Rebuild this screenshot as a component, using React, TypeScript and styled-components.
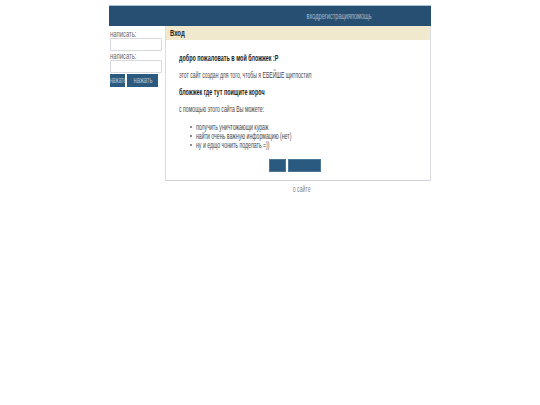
import React from "react";
import styled, { createGlobalStyle } from "styled-components";

const GlobalStyle = createGlobalStyle`
  html, body {
    margin: 0;
    padding: 0;
    background: #fff;
  }
  body {
    font-family: "Liberation Sans", Arial, sans-serif;
    font-size: 8.5px;
    color: #444;
  }
`;

// the original font is a condensed one, none is installed so squeeze the text
const Squeezed = styled.span<{ $origin?: string; $scale?: number }>`
  display: inline-block;
  flex-shrink: 0;
  white-space: nowrap;
  transform: scaleX(${({ $scale }) => $scale ?? 0.61});
  transform-origin: ${({ $origin }) => $origin ?? "left"} center;
`;

const Page = styled.div`
  width: 322px;
  margin-left: 109px;
  padding-top: 5px;
`;

const Header = styled.header`
  height: 21px;
  background: #264f72;
  border-top: 1px solid #a9c4d6;
  box-sizing: border-box;
  display: flex;
  justify-content: flex-end;
  align-items: center;
  padding-right: 59px;
`;

const NavLink = styled.a`
  color: #a9bccb;
  font-size: 8.5px;
`;

const Columns = styled.div`
  display: flex;
  gap: 3px;
`;

const Sidebar = styled.form`
  width: 53px;
  display: flex;
  flex-direction: column;
  padding-top: 3px;
`;

const FieldLabel = styled.label`
  height: 9px;
  line-height: 11px;
  font-size: 8.5px;
  color: #666;
  margin-left: 1px;
`;

const TextInput = styled.input`
  width: 52px;
  height: 13px;
  box-sizing: border-box;
  border: 1px solid #d5d8dc;
  border-radius: 1px;
  background: #fff;
  padding: 0;
  margin: 0 0 0 1px;
`;

const ButtonRow = styled.div`
  display: flex;
  gap: 2px;
  margin: 1px 0 0 1px;
`;

const SideButton = styled.button<{ $width: number }>`
  width: ${({ $width }) => $width}px;
  height: 13px;
  padding: 0;
  border: 0;
  background: #2a5a80;
  color: #b5c7d5;
  font: inherit;
  font-size: 8.5px;
  line-height: 13px;
  display: flex;
  justify-content: center;
`;

const Panel = styled.main`
  width: 266px;
  height: 155px;
  box-sizing: border-box;
  border: 1px solid #dcdde3;
  border-top: 0;
  border-bottom: 1px solid #cfd0dc;
`;

const PanelTitle = styled.h2`
  margin: 0;
  height: 14px;
  line-height: 14px;
  padding-left: 4px;
  background: #f0e9ce;
  color: #222;
  font-size: 9px;
  font-weight: bold;
`;

const PanelBody = styled.div`
  padding: 15px 13px 0 12.5px;
`;

const Paragraph = styled.p<{ $strong?: boolean }>`
  margin: 0 0 11px;
  height: 6px;
  line-height: 6px;
  font-size: 8.5px;
  color: ${({ $strong }) => ($strong ? "#1a1a1a" : "#444")};
  font-weight: ${({ $strong }) => ($strong ? "bold" : "normal")};
`;

const List = styled.ul`
  list-style: none;
  margin: 7px 0 0;
  padding: 0 0 0 11px;
`;

const ListItem = styled.li`
  height: 9px;
  line-height: 9px;
  padding-left: 6px;
  position: relative;
  &::before {
    content: "";
    position: absolute;
    left: 0;
    top: 3px;
    width: 2px;
    height: 2px;
    border-radius: 50%;
    background: #666;
  }
`;

const Actions = styled.div`
  display: flex;
  justify-content: center;
  gap: 2px;
  margin: 9px 6px 0 0;
`;

const ActionButton = styled.button<{ $width: number }>`
  width: ${({ $width }) => $width}px;
  height: 13px;
  padding: 0;
  border: 1px solid #4d7795;
  background: #2a5a80;
`;

const Footer = styled.footer`
  margin-left: 56px;
  width: 266px;
  box-sizing: border-box;
  padding: 5px 0 0 7px;
  text-align: center;
  line-height: 7px;
  color: #6f8596;
`;

export default function App() {
  return (
    <>
      <GlobalStyle />
      <Page>
        <Header>
          <NavLink><Squeezed $origin="right" $scale={0.66}>входрегистрацияпомощь</Squeezed></NavLink>
        </Header>
        <Columns>
          <Sidebar>
            <FieldLabel><Squeezed $scale={0.69}>написать:</Squeezed></FieldLabel>
            <TextInput />
            <FieldLabel><Squeezed $scale={0.69}>написать:</Squeezed></FieldLabel>
            <TextInput />
            <ButtonRow>
              <SideButton $width={15} type="button"><Squeezed $origin="center" $scale={0.58}>нажать</Squeezed></SideButton>
              <SideButton $width={31} type="button"><Squeezed $origin="center" $scale={0.68}>нажать</Squeezed></SideButton>
            </ButtonRow>
          </Sidebar>
          <Panel>
            <PanelTitle><Squeezed $scale={0.66}>Вход</Squeezed></PanelTitle>
            <PanelBody>
              <Paragraph $strong><Squeezed $scale={0.64}>добро пожаловать в мой бложжек :P</Squeezed></Paragraph>
              <Paragraph><Squeezed $scale={0.6}>этот сайт создан для того, чтобы я ЕБЕЙШЕ щитпостил</Squeezed></Paragraph>
              <Paragraph $strong><Squeezed $scale={0.64}>бложжек где тут поищите короч</Squeezed></Paragraph>
              <Paragraph><Squeezed>с помощью этого сайта Вы можете:</Squeezed></Paragraph>
              <List>
                <ListItem><Squeezed>получить уничтожающи кураж</Squeezed></ListItem>
                <ListItem><Squeezed>найти очень важную информацию (нет)</Squeezed></ListItem>
                <ListItem><Squeezed>ну и едщо чонить поделать =))</Squeezed></ListItem>
              </List>
              <Actions>
                <ActionButton $width={17} type="button" />
                <ActionButton $width={33} type="button" />
              </Actions>
            </PanelBody>
          </Panel>
        </Columns>
        <Footer><Squeezed $origin="center" $scale={0.6}>о сайте</Squeezed></Footer>
      </Page>
    </>
  );
}
